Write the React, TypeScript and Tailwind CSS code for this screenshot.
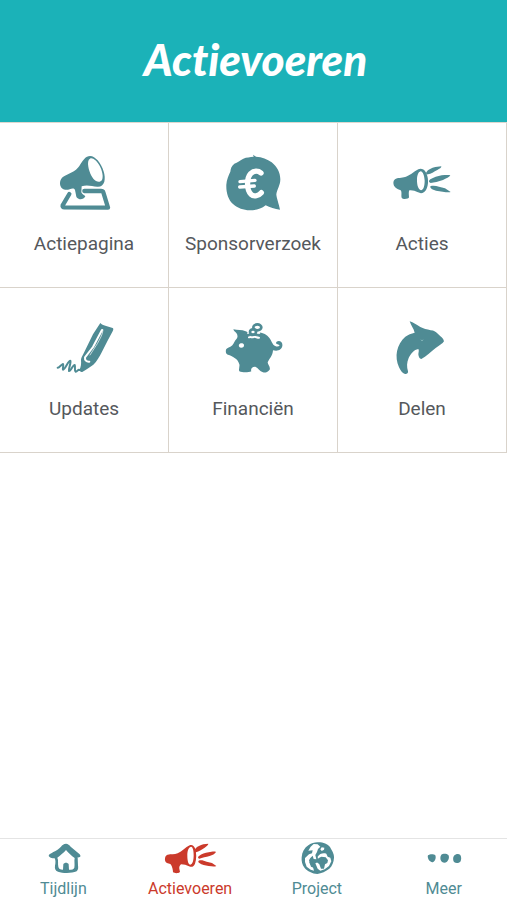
import { useState, type ReactNode } from "react";

interface Item {
  label: string;
  icon: ReactNode;
}

// --- Icon wrappers ---
function TileIcon({ viewBox, children }: { viewBox: string; children: ReactNode }) {
  return (
    <svg className="h-16 w-16" viewBox={viewBox} fill="currentColor" aria-hidden="true">
      {children}
    </svg>
  );
}

function TabIcon({ viewBox, children }: { viewBox: string; children: ReactNode }) {
  return (
    <svg className="h-9 w-15" viewBox={viewBox} fill="currentColor" aria-hidden="true">
      {children}
    </svg>
  );
}

const ACTIONS: Item[] = [
  {
    label: "Actiepagina",
    icon: (
      <TileIcon viewBox="66 33 192 192">
        <path
          d="M118 162L98 196C97 200 99 202 103 202L234 203L220 157C219 154 217 153 213 153L163 153"
          fill="none"
          stroke="currentColor"
          strokeWidth="13"
          strokeLinejoin="round"
          strokeLinecap="round"
        />
        <path
          fillRule="evenodd"
          d="M171 50c11-6 23 0 32 11 16 19 25 47 20 64-3 10-11 16-21 15-16-1-31-7-47-1l-1 18c2 6 8 8 12 12-3 7-12 10-19 8-6-2-9-6-9-12l-3-15c-3-6-9-5-16-2-15 5-28-2-29-17 0-15 8-22 21-27 15-6 25-11 34-22 9-12 15-26 26-32zM180 56c-6 3-7 12-5 24 3 17 12 36 23 43 7 4 14 3 18-3 5-9 1-28-8-44-8-14-20-24-28-20z"
        />
      </TileIcon>
    ),
  },
  {
    label: "Sponsorverzoek",
    icon: (
      <TileIcon viewBox="123 33 192 192">
        <path d="M219 44L228 50C246 51 262 57 275 67C291 80 301 97 301 118C301 136 291 148 289 163C289 172 297 193 300 209C284 207 270 203 257 196C242 208 225 211 209 211C191 210 173 205 159 192C145 179 138 158 139 134C140 118 146 106 151 95C152 85 155 77 163 71C172 67 181 61 190 56C200 51 210 52 221 50Z" />
        <path
          d="M243 99C235 92 222 91 212 101C199 115 200 151 213 163C222 172 236 167 244 158"
          fill="none"
          stroke="#fff"
          strokeWidth="16"
          strokeLinecap="round"
        />
        <path
          d="M180 125L225 121M179 141L223 138"
          fill="none"
          stroke="#fff"
          strokeWidth="10"
          strokeLinecap="round"
        />
      </TileIcon>
    ),
  },
  {
    label: "Acties",
    icon: (
      <TileIcon viewBox="60 33 192 192">
        <path
          fillRule="evenodd"
          d="M145 88c8-4 17 0 22 8 9 15 10 39 1 54-5 9-15 12-24 7-9-4-16-7-26-6-3 6-1 14-1 21 0 5-17 7-21 3-4-5 1-19-4-24-5-3-11-4-15-8-7-6-9-17-4-23 5-7 18-5 29-8 17-3 29-18 43-24zM152 94c-8 2-11 14-11 27 0 15 4 28 12 30 8-2 11-14 11-29-1-15-5-27-12-28z"
        />
        <path d="M169 97c5-9 16-13 27-16l18-2c1 4-6 8-12 11-10 5-19 12-28 13-5 1-7-2-5-6zM181 118c10-6 22-10 34-12 10-1 21-2 26 0-2 5-13 10-22 14-13 5-27 8-37 9-7-2-6-8-1-11zM181 139c8-3 17-1 26 1l18 5 17 11c-5 2-15 0-24-1l-20-3c-8-2-18-5-17-13z" />
      </TileIcon>
    ),
  },
  {
    label: "Updates",
    icon: (
      <TileIcon viewBox="66 33 192 192">
        <path
          d="M83 188C88 189 94 178 99 177C102 180 97 190 99 194C106 193 114 167 121 167C124 174 115 190 117 198C122 200 129 178 134 180C137 186 132 196 137 200C141 201 144 193 147 194L156 196"
          fill="none"
          stroke="currentColor"
          strokeWidth="6"
          strokeLinecap="round"
          strokeLinejoin="round"
        />
        <path d="M211 54C215 58 220 61 226 62L248 69C251 71 250 75 248 79L232 109L216 140C208 155 201 168 190 179C180 187 170 192 158 200C153 202 149 199 148 195C153 186 154 176 153 165C153 160 156 154 160 147L189 88Z" />
        <path
          d="M219 75C218 90 209 102 202 116L180 150"
          fill="none"
          stroke="#fff"
          strokeWidth="2"
          strokeLinecap="round"
        />
        <path
          d="M216 75L189 126L165 157C164 165 169 171 178 170"
          fill="none"
          stroke="#fff"
          strokeWidth="6"
          strokeLinecap="round"
          strokeLinejoin="round"
        />
      </TileIcon>
    ),
  },
  {
    label: "Financiën",
    icon: (
      <TileIcon viewBox="63 33 192 192">
        <path d="M100 73C112 76 125 74 137 79C144 82 147 84 154 82C172 79 190 82 202 92C211 99 213 108 220 119C226 125 234 126 239 122C237 117 229 119 228 114C229 107 239 106 244 111C250 118 247 129 241 133C235 138 227 138 219 136C218 153 208 161 203 172C203 179 212 186 209 194C203 201 195 204 189 202C179 199 175 189 166 185C157 184 151 191 154 199C145 203 127 203 118 199C115 192 120 185 118 178C115 169 111 164 105 160C97 154 91 151 84 149C77 147 76 137 79 132C84 128 91 127 97 121C102 115 104 107 110 101C114 97 113 89 109 84C105 80 101 78 100 73Z" />
        <path d="M117 119c4-6 12-5 15 0 1 5-3 9-8 9-6 0-9-5-7-9z" fill="#fff" />
        <path
          d="M147 97C152 95 155 98 161 96C166 94 170 98 177 98"
          fill="none"
          stroke="#fff"
          strokeWidth="6"
          strokeLinecap="round"
        />
        <path d="M149 71h26l6 14-8 6h-26l-6-6z" fill="#fff" />
        <g fill="#fff" stroke="currentColor" strokeWidth="8">
          <ellipse cx="172" cy="67" rx="12" ry="9" />
          <ellipse cx="159" cy="81" rx="9" ry="8" />
        </g>
        <path d="M144 86h32l2 6h-36z" />
      </TileIcon>
    ),
  },
  {
    label: "Delen",
    icon: (
      <TileIcon viewBox="60 33 192 192">
        <path d="M119 49C130 52 140 60 151 66C160 71 171 73 182 76C192 76 199 81 205 88C212 95 221 101 222 109C218 117 207 121 197 129C182 140 169 155 154 162C148 161 146 156 145 148C145 142 148 137 145 132C132 134 122 147 116 159C110 173 110 186 114 199C115 205 110 208 105 207C96 205 92 197 87 187C80 171 78 154 81 139C85 121 93 106 106 95C114 89 124 85 134 83C131 70 123 62 119 49Z" />
        <path d="M153 104l3 4 3-4" fill="none" stroke="#82b5b9" strokeWidth="3" />
      </TileIcon>
    ),
  },
];

const TABS: Item[] = [
  {
    label: "Tijdlijn",
    icon: (
      <TabIcon viewBox="40 27 180 108">
        <path
          fillRule="evenodd"
          d="M139 41C145 41 149 45 153 50L180 73C185 79 182 83 174 82L175 106C176 113 176 120 171 124C156 130 130 130 115 125C106 121 105 115 106 107C108 98 108 91 105 85C97 85 88 82 87 77C88 72 95 70 101 66C110 61 118 57 124 50C128 45 132 41 139 41ZM139 60C131 69 122 76 113 83C117 91 114 101 116 110C117 116 121 119 130 119L131 103C134 97 144 97 147 103L148 119C157 119 162 118 164 113C166 103 163 93 165 84C155 77 147 69 139 60Z"
        />
      </TabIcon>
    ),
  },
  {
    label: "Actievoeren",
    icon: (
      <TabIcon viewBox="420 27 180 108">
        <path
          fillRule="evenodd"
          d="M509 46c7-3 13 1 16 9 5 14 5 33 0 46-3 8-9 12-18 8-8-4-14-6-24-6-4 4-6 8-5 13l2 10c-6 5-16 4-21 1 0-8-2-16-6-23-5-5-15-3-17-10-3-9 0-18 7-20 10-2 20 1 30-4 14-6 23-18 36-24zM513 50c-8 2-11 13-11 27 0 16 3 26 9 27 7-1 10-13 10-28 0-14-2-25-8-26z"
        />
        <path d="M526 56c6-7 15-10 24-13l15-2c0 4-6 8-11 12-10 6-17 11-26 14-5 0-6-7-2-11zM537 78c8-6 18-9 29-11 9-2 18-4 22-1-3 6-11 9-19 12-11 3-22 5-31 8-5-1-5-6-1-8zM536 92c7-3 16 0 24 3l16 4 13 9c-6 3-14 1-23 0-11-2-20-3-28-9-3-2-4-5-2-7z" />
      </TabIcon>
    ),
  },
  {
    label: "Project",
    icon: (
      <TabIcon viewBox="80 27 180 108">
        <path d="M171 37C186 36 202 41 209 51C214 60 222 72 221 83C220 96 216 107 207 116C197 124 183 130 171 132C156 131 141 124 133 114C125 105 123 93 124 82C125 66 132 53 145 45C153 40 162 37 171 37Z" />
        <path
          d="M151 50L160 42L172 43L180 50L173 57L170 66L165 75L168 88L160 87L157 77L150 84L146 91L149 102L158 112L161 122L151 119L139 110L134 96L134 84L146 73L155 70L157 61L144 62Z"
          fill="#fff"
        />
        <path d="M172 80C178 71 188 68 198 71L202 80L210 83L213 94L206 108L193 118L180 122L172 116L165 100L174 96Z" fill="#fff" />
        <path d="M174 85L183 80L196 82L203 91L201 99L194 103L191 116L182 116L177 103L170 97ZM147 96L154 94L163 107L160 113L152 110Z" />
        <path d="M184 52L192 53L191 59L184 63L180 58Z" fill="#fff" />
      </TabIcon>
    ),
  },
  {
    label: "Meer",
    icon: (
      <TabIcon viewBox="460 27 180 108">
        <path d="M502 76c5-4 17-5 22 0 3 7 0 16-6 20-5 2-9-1-13-5-3-5-5-11-3-15zM542 74c5-4 16-4 21 1 4 6 1 16-4 20-5 4-13 4-17-1-4-6-4-15 0-20zM580 77c5-5 14-7 19-2 4 6 3 15 0 20-5 5-14 5-19 1-3-5-4-14 0-19z" />
      </TabIcon>
    ),
  },
];

export default function App() {
  const [active, setActive] = useState("Actievoeren");

  return (
    <div className="flex min-h-screen flex-col bg-white font-['Roboto',sans-serif]">
      <header className="flex h-[122px] items-center justify-center bg-[#1bb2b8] pb-1 pl-1">
        <h1 className="font-['Lato',sans-serif] text-[44px] leading-none font-black text-white italic [font-variant-ligatures:none]">
          Actievoeren
        </h1>
      </header>

      {/* --- Action tiles --- */}
      <main className="grid grid-cols-3 border-t border-[#ddd7cf]">
        {ACTIONS.map((action) => (
          <button
            key={action.label}
            type="button"
            className="flex flex-col items-center border-r border-b border-[#d9d3cb] pt-7 pb-[30px] text-[#4f8b94]"
          >
            {action.icon}
            <span className="mt-4 text-[19px] leading-[26px] text-[#55585c]">{action.label}</span>
          </button>
        ))}
      </main>

      {/* --- Bottom tab bar --- */}
      <nav className="mt-auto grid grid-cols-4 border-t border-[#e4e4e4] pb-px">
        {TABS.map((tab) => (
          <a
            key={tab.label}
            href="#"
            onClick={() => setActive(tab.label)}
            aria-current={active === tab.label ? "page" : undefined}
            className={`flex flex-col items-center ${active === tab.label ? "text-[#cb3a2b]" : "text-[#4f8b94]"}`}
          >
            {tab.icon}
            <span className="mt-1 text-base leading-5">{tab.label}</span>
          </a>
        ))}
      </nav>
    </div>
  );
}
